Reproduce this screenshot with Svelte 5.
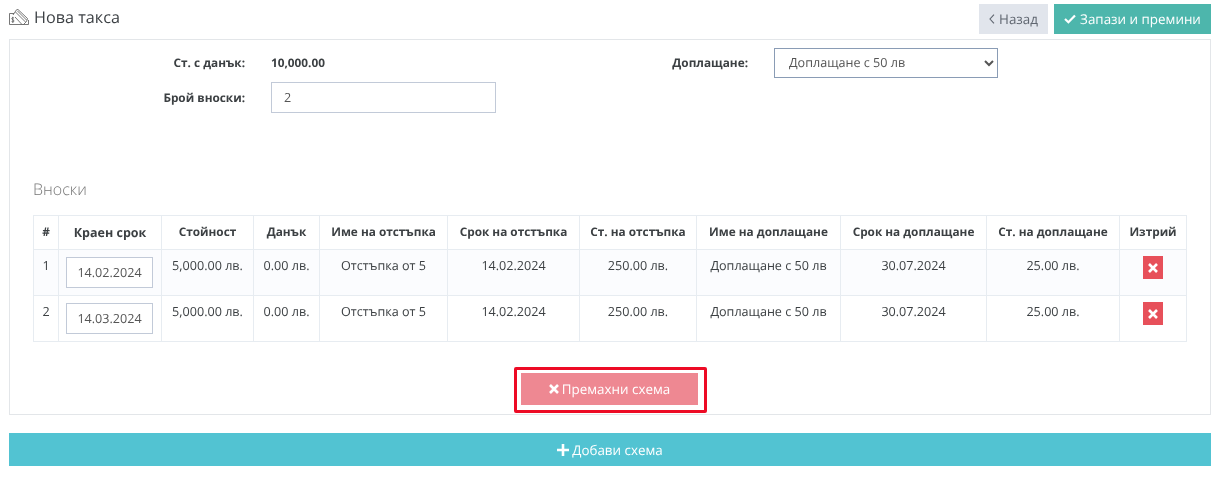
<script>
  const cols = [25, 103, 92, 66, 128, 132, 117, 144, 146, 133, 67];
  const heads = ['#', 'Краен срок', 'Стойност', 'Данък', 'Име на отстъпка', 'Срок на отстъпка', 'Ст. на отстъпка', 'Име на доплащане', 'Срок на доплащане', 'Ст. на доплащане', 'Изтрий'];
  const rows = [
    { n: 1, due: '14.02.2024' },
    { n: 2, due: '14.03.2024' }
  ];
</script>

<div class="page">
  <header class="top">
    <h1 class="title">
      <svg class="ticon" viewBox="0 0 20 16" width="20" height="16" fill="none" stroke="#555" stroke-width="0.8">
        <path d="M5 4.5 H.5 V15.5 H19.5 V11" />
        <path d="M4 6 L7.5 .8 L9 .5 L18.5 9.5 L17.5 12.5 L14.5 15.5" />
        <path d="M6.5 3 L16.5 13 M8.5 2 L17.5 11 M6 8 L13 15.5" />
        <path d="M4.8 9 C4 8.3 2.6 8.7 2.8 9.8 C3 10.8 5 10.8 5 12 C5 13 3.5 13.2 2.6 12.5 M3.8 7.8 V13.8" />
      </svg>
      Нова такса
    </h1>
    <div class="actions">
      <button class="btn back">
        <svg viewBox="0 0 6 10" width="6" height="10" fill="none" stroke="#5f6670" stroke-width="1.1"><path d="M5 .7 L1 5 L5 9.3" /></svg>
        Назад
      </button>
      <button class="btn save">
        <svg viewBox="0 0 12 10" width="12" height="10" fill="none" stroke="#fff" stroke-width="2.2"><path d="M1 5 L4.4 8.2 L11 1.4" /></svg>
        Запази и премини
      </button>
    </div>
  </header>

  <section class="panel">
    <div class="form">
      <div class="fcol">
        <div class="field first">
          <span class="label">Ст. с данък:</span>
          <strong class="val">10,000.00</strong>
        </div>
        <div class="field">
          <span class="label">Брой вноски:</span>
          <input class="inp" value="2" />
        </div>
      </div>
      <div class="fcol two">
        <div class="field">
          <span class="label">Доплащане:</span>
          <select class="sel"><option>Доплащане с 50 лв</option></select>
        </div>
      </div>
    </div>

    <h2 class="sub">Вноски</h2>

    <table>
      <colgroup>
        {#each cols as w}<col style="width:{w}px" />{/each}
      </colgroup>
      <thead>
        <tr>{#each heads as h, i}<th class:big={i === 1}>{h}</th>{/each}</tr>
      </thead>
      <tbody>
        {#each rows as r}
          <tr>
            <td class="num">{r.n}</td>
            <td class="due"><input class="date" value={r.due} /></td>
            <td>5,000.00 лв.</td>
            <td>0.00 лв.</td>
            <td>Отстъпка от 5</td>
            <td>14.02.2024</td>
            <td>250.00 лв.</td>
            <td>Доплащане с 50 лв</td>
            <td>30.07.2024</td>
            <td>25.00 лв.</td>
            <td class="del">
              <button class="x" aria-label="Изтрий">
                <svg viewBox="0 0 10 10" width="10" height="10" stroke="#fff" stroke-width="2.6"><path d="M1 1 L9 9 M9 1 L1 9" /></svg>
              </button>
            </td>
          </tr>
        {/each}
      </tbody>
    </table>

    <div class="remove-wrap">
      <div class="outline">
        <button class="btn remove">
          <svg viewBox="0 0 10 10" width="10" height="10" stroke="#fff" stroke-width="2.6"><path d="M1 1 L9 9 M9 1 L1 9" /></svg>
          Премахни схема
        </button>
      </div>
    </div>
  </section>

  <button class="btn add">
    <svg viewBox="0 0 12 12" width="12" height="12" stroke="#fff" stroke-width="2.6"><path d="M6 0 V12 M0 6 H12" /></svg>
    Добави схема
  </button>
</div>

<style>
  :global(body) {
    margin: 0;
    background: #fff;
  }
  .page {
    box-sizing: border-box;
    width: 1223px;
    height: 488px;
    padding: 4px 12px 0 9px;
    font-family: "Open Sans", sans-serif;
    font-size: 12.6px;
    color: #3c4043;
    overflow: hidden;
    text-rendering: geometricPrecision;
    will-change: transform;
  }
  .top {
    display: flex;
    justify-content: space-between;
    align-items: flex-start;
    height: 35px;
  }
  .title {
    display: flex;
    align-items: center;
    gap: 5px;
    margin: 0;
    height: 25px;
    font-size: 16.2px;
    font-weight: 400;
    color: #3d4145;
  }
  .ticon {
    flex: none;
  }
  .actions {
    display: flex;
    gap: 6px;
  }
  .actions .btn {
    gap: 4px;
  }
  .btn {
    display: flex;
    align-items: center;
    justify-content: center;
    gap: 3px;
    border: 0;
    padding: 0;
    font-family: inherit;
    font-size: 13.4px;
    text-rendering: geometricPrecision;
    color: #fff;
  }
  .back {
    width: 69px;
    height: 30px;
    background: #e1e5ec;
    color: #5f6670;
  }
  .save {
    width: 157px;
    height: 30px;
    background: #4db6ac;
  }
  .panel {
    box-sizing: border-box;
    height: 376px;
    border: 1px solid #e3e6e9;
    padding: 0 23px;
  }
  .form {
    display: flex;
    height: 105px;
    padding-top: 8px;
    box-sizing: border-box;
  }
  .fcol {
    flex: none;
    width: 636px;
    margin-left: -4px;
  }
  .two {
    width: 400px;
    margin-left: 0;
  }
  .field {
    display: flex;
    align-items: center;
    min-height: 31px;
  }
  .two .field {
    margin-top: -1px;
  }
  .field.first {
    min-height: 14px;
    height: 14px;
    margin: 8px 0 12px;
  }
  .label {
    width: 216px;
    margin-right: 26px;
    text-align: right;
    font-size: 11.8px;
    font-weight: 700;
    color: #3c4043;
  }
  .two .label {
    width: 83px;
  }
  .val {
    font-size: 11.8px;
    font-weight: 700;
  }
  .inp {
    box-sizing: border-box;
    width: 225px;
    height: 31px;
    border: 1px solid #c2cad8;
    padding: 0 12px;
    font-family: inherit;
    font-size: 12.6px;
    text-rendering: geometricPrecision;
    color: #555;
    outline: 0;
  }
  .sel {
    box-sizing: border-box;
    width: 224px;
    height: 30px;
    border: 1px solid #8a9cb5;
    border-radius: 0;
    padding: 0 10px;
    background: #fff;
    font-family: inherit;
    font-size: 12.6px;
    text-rendering: geometricPrecision;
    color: #555;
  }
  .sub {
    margin: 33px 0 15px;
    height: 22px;
    font-size: 16px;
    line-height: 22px;
    font-weight: 300;
    color: #777;
  }
  table {
    table-layout: fixed;
    border-collapse: collapse;
    width: 1153px;
    font-size: 12.6px;
  }
  th,
  td {
    border: 1px solid #e7ecf1;
    padding: 7px 2px 8px;
    text-align: center;
    vertical-align: top;
    line-height: 17px;
    color: #3c4043;
  }
  th {
    font-weight: 700;
    padding-top: 8px;
    height: 17px;
    font-size: 11.8px;
  }
  th.big {
    font-size: 12.5px;
  }
  tbody tr:nth-child(odd) {
    background: #fbfcfe;
  }
  td.due {
    padding: 7px 0;
  }
  .date {
    box-sizing: border-box;
    display: block;
    margin: 0 0 0 7px;
    width: 87px;
    height: 31px;
    border: 1px solid #c2cad8;
    padding: 0;
    text-align: center;
    font-family: inherit;
    font-size: 12.6px;
    text-rendering: geometricPrecision;
    color: #555;
    outline: 0;
  }
  td.del {
    padding: 6px 1px 0 0;
  }
  .x {
    display: inline-flex;
    align-items: center;
    justify-content: center;
    width: 20px;
    height: 23px;
    border: 0;
    padding: 0;
    background: #e7505a;
  }
  .remove-wrap {
    display: flex;
    justify-content: center;
    margin-top: 25px;
  }
  .outline {
    border: 3px solid #ed0b25;
    border-radius: 2px;
    padding: 3px 6px 5px 4px;
    margin-left: 1px;
  }
  .remove {
    width: 177px;
    height: 32px;
    background: #ee8892;
  }
  .add {
    width: 1202px;
    height: 33px;
    margin-top: 18px;
    background: #52c3d2;
  }
</style>
